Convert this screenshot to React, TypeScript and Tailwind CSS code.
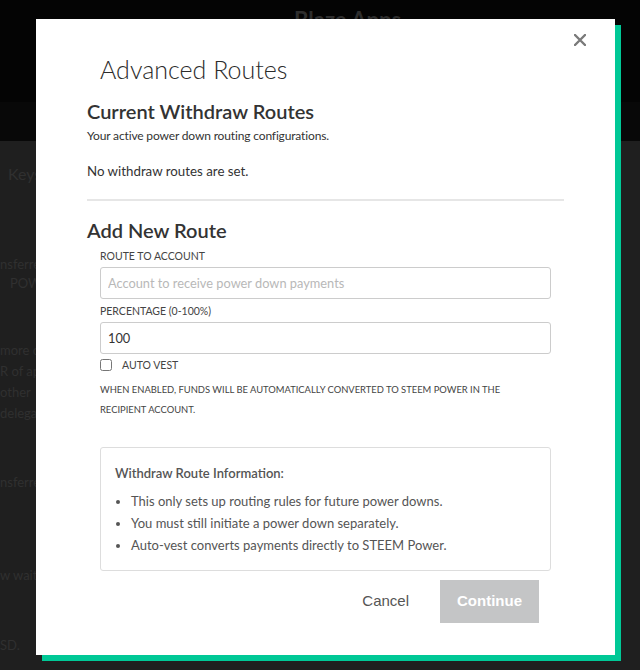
import React from "react";

function BackgroundPage() {
  return (
    <div className="w-[640px] h-[670px] overflow-hidden bg-[#1f1f1f] font-['Lato',sans-serif] text-[#303030]">
      <header className="h-[102px] bg-[#040404] pl-[294px] pt-[6px]">
        <div className="text-[22px] leading-[28px] font-bold text-[#2e2e2e]">Blaze Apps</div>
      </header>
      <nav className="h-[39px] bg-[#080808]" />
      <div className="whitespace-nowrap">
        <div className="pl-[8px] pt-[22px] text-[16px] leading-[22px]">Keys</div>
        <div className="mt-[70px] text-[13px] leading-[19px]">
          <div>nsferred</div>
          <div className="pl-[10px]">POWER</div>
        </div>
        <div className="mt-[47px] text-[13px] leading-[21px]">
          <div>more co</div>
          <div>R of app</div>
          <div>other</div>
          <div>delegat</div>
        </div>
        <div className="mt-[49px] text-[13px] leading-[19px]">nsferred</div>
        <div className="mt-[74px] text-[13px] leading-[19px]">w waiting</div>
        <div className="mt-[51px] text-[13px] leading-[19px]">SD.</div>
      </div>
    </div>
  );
}

function CloseIcon() {
  return (
    <svg width="12" height="12" viewBox="0 0 12 12" fill="none">
      <path d="M1 1L11 11M11 1L1 11" stroke="#7a7a7a" strokeWidth="2.4" strokeLinecap="round" />
    </svg>
  );
}

function AdvancedRoutesModal() {
  return (
    <div className="absolute left-[36px] top-[19px] w-[579px] h-[636px] bg-white shadow-[6px_6px_0_#00c896] px-[51px] pt-[35px] font-['Lato',sans-serif] text-[#333]">
      <button className="absolute right-[29px] top-[15px] p-0">
        <CloseIcon />
      </button>

      <h2 className="pl-[13px] text-[25px] leading-[30px] font-light text-[#2b2b2b]">Advanced Routes</h2>

      <h3 className="mt-[15px] text-[20px] leading-[24px] font-semibold">Current Withdraw Routes</h3>
      <p className="mt-[5px] text-[12px] leading-[16px] tracking-[-0.15px]">Your active power down routing configurations.</p>
      <p className="mt-[17px] text-[13.3px] leading-[20px]">No withdraw routes are set.</p>

      <div className="mt-[18px] h-[2px] bg-[#e6e6e6]" />

      <h3 className="mt-[17px] text-[20px] leading-[24px] font-semibold">Add New Route</h3>

      <div className="px-[13px]">
        <label className="block mt-[7px] text-[10.5px] leading-[14px] uppercase text-[#444]">Route to account</label>
        <input
          className="mt-[4px] block h-[32px] w-full rounded-[3px] border border-[#ccc] px-[7px] text-[12.8px] text-[#333] outline-none placeholder:text-[#b8b8b8]"
          placeholder="Account to receive power down payments"
        />

        <label className="block mt-[5px] text-[10.5px] leading-[14px] uppercase text-[#444]">Percentage (0-100%)</label>
        <input
          className="mt-[4px] block h-[32px] w-full rounded-[3px] border border-[#ccc] px-[7px] text-[12.8px] text-[#333] outline-none"
          defaultValue="100"
        />

        <div className="mt-[4px] flex h-[14px] items-center gap-[10px]">
          <input type="checkbox" className="h-[12px] w-[12px]" />
          <span className="text-[10.5px] leading-[14px] uppercase text-[#444]">Auto vest</span>
        </div>
        <p className="mt-[8px] pr-[10px] text-[9.4px] leading-[20px] uppercase text-[#444]">
          When enabled, funds will be automatically converted to STEEM Power in the recipient account.
        </p>

        <div className="mt-[27px] rounded-[3px] border border-[#ddd] px-[14px] pt-[16px] pb-[14px] text-[#555]">
          <div className="text-[13px] leading-[18px] font-semibold">Withdraw Route Information:</div>
          <ul className="mt-[8px] list-disc pl-[16px] text-[13px] leading-[22px]">
            <li>This only sets up routing rules for future power downs.</li>
            <li>You must still initiate a power down separately.</li>
            <li>Auto-vest converts payments directly to STEEM Power.</li>
          </ul>
        </div>

        <div className="mt-[9px] flex items-center justify-end gap-[31px] pr-[12px] font-['Liberation_Sans',Arial,sans-serif]">
          <button className="text-[15px] text-[#555]">Cancel</button>
          <button className="h-[43px] w-[99px] bg-[#c4c5c6] text-[15px] font-bold text-white">Continue</button>
        </div>
      </div>
    </div>
  );
}

export default function App() {
  return (
    <div className="relative w-[640px] h-[670px]">
      <BackgroundPage />
      <AdvancedRoutesModal />
    </div>
  );
}
